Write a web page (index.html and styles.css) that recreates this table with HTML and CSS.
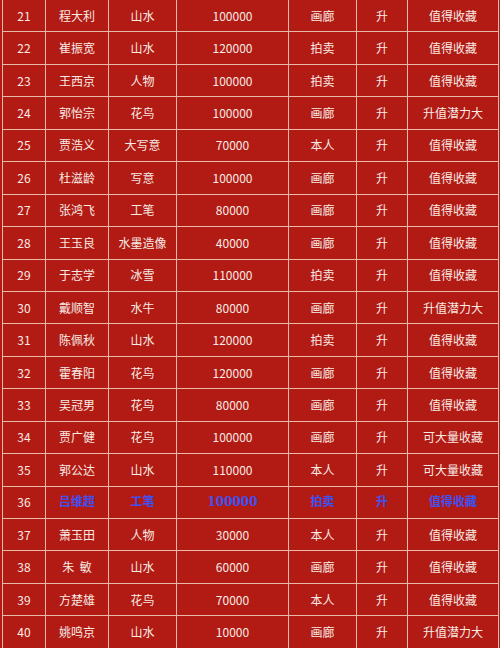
FILE: index.html
```html
<!DOCTYPE html>
<html lang="zh">
<head>
<meta charset="utf-8">
<link rel="stylesheet" href="styles.css">
</head>
<body>
<table class="grid">
<colgroup>
<col class="c1"><col class="c2"><col class="c3"><col class="c4"><col class="c5"><col class="c6"><col class="c7">
</colgroup>
<tbody>
<tr><td>21</td><td>程大利</td><td>山水</td><td>100000</td><td>画廊</td><td>升</td><td>值得收藏</td></tr>
<tr><td>22</td><td>崔振宽</td><td>山水</td><td>120000</td><td>拍卖</td><td>升</td><td>值得收藏</td></tr>
<tr><td>23</td><td>王西京</td><td>人物</td><td>100000</td><td>拍卖</td><td>升</td><td>值得收藏</td></tr>
<tr><td>24</td><td>郭怡宗</td><td>花鸟</td><td>100000</td><td>画廊</td><td>升</td><td>升值潜力大</td></tr>
<tr><td>25</td><td>贾浩义</td><td>大写意</td><td>70000</td><td>本人</td><td>升</td><td>值得收藏</td></tr>
<tr><td>26</td><td>杜滋龄</td><td>写意</td><td>100000</td><td>画廊</td><td>升</td><td>值得收藏</td></tr>
<tr><td>27</td><td>张鸿飞</td><td>工笔</td><td>80000</td><td>画廊</td><td>升</td><td>值得收藏</td></tr>
<tr><td>28</td><td>王玉良</td><td>水墨造像</td><td>40000</td><td>画廊</td><td>升</td><td>值得收藏</td></tr>
<tr><td>29</td><td>于志学</td><td>冰雪</td><td>110000</td><td>拍卖</td><td>升</td><td>值得收藏</td></tr>
<tr><td>30</td><td>戴顺智</td><td>水牛</td><td>80000</td><td>画廊</td><td>升</td><td>升值潜力大</td></tr>
<tr><td>31</td><td>陈佩秋</td><td>山水</td><td>120000</td><td>拍卖</td><td>升</td><td>值得收藏</td></tr>
<tr><td>32</td><td>霍春阳</td><td>花鸟</td><td>120000</td><td>画廊</td><td>升</td><td>值得收藏</td></tr>
<tr><td>33</td><td>吴冠男</td><td>花鸟</td><td>80000</td><td>画廊</td><td>升</td><td>值得收藏</td></tr>
<tr><td>34</td><td>贾广健</td><td>花鸟</td><td>100000</td><td>画廊</td><td>升</td><td>可大量收藏</td></tr>
<tr><td>35</td><td>郭公达</td><td>山水</td><td>110000</td><td>本人</td><td>升</td><td>可大量收藏</td></tr>
<tr class="hl"><td class="plain">36</td><td>吕维超</td><td>工笔</td><td>100000</td><td>拍卖</td><td>升</td><td>值得收藏</td></tr>
<tr><td>37</td><td>萧玉田</td><td>人物</td><td>30000</td><td>本人</td><td>升</td><td>值得收藏</td></tr>
<tr><td>38</td><td>朱&nbsp;&nbsp;敏</td><td>山水</td><td>60000</td><td>画廊</td><td>升</td><td>值得收藏</td></tr>
<tr><td>39</td><td>方楚雄</td><td>花鸟</td><td>70000</td><td>本人</td><td>升</td><td>值得收藏</td></tr>
<tr><td>40</td><td>姚鸣京</td><td>山水</td><td>10000</td><td>画廊</td><td>升</td><td>升值潜力大</td></tr>
</tbody>
</table>
</body>
</html>
```
FILE: styles.css
```css
html, body {
  margin: 0;
  padding: 0;
  background: #b21a14;
  overflow: hidden;
}
.grid {
  margin: -1px 0 0 2px;
  width: 496px;
  table-layout: fixed;
  border-collapse: collapse;
  font-family: "Noto Sans CJK SC", "Liberation Sans", sans-serif;
  font-size: 12px;
  color: #f6ebe4;
}
.c1 { width: 43px; }
.c2 { width: 63px; }
.c3 { width: 68px; }
.c4 { width: 112px; }
.c5 { width: 68px; }
.c6 { width: 51px; }
.c7 { width: 91px; }
.grid td {
  border: 1px solid #e7b9a9;
  height: 31.45px;
  padding: 0;
  text-align: center;
  vertical-align: middle;
  line-height: 14px;
}
.hl td {
  color: #3d52f2;
  font-weight: bold;
  font-family: "DejaVu Serif", "Noto Sans CJK SC", serif;
}
.hl td.plain {
  color: #f6ebe4;
  font-weight: normal;
  font-family: "Noto Sans CJK SC", "Liberation Sans", sans-serif;
}
```
